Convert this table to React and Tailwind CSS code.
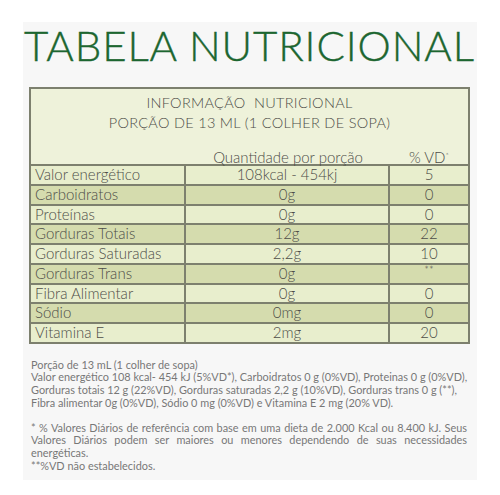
const rows = [
  { name: "Valor energético", qty: "108kcal - 454kj", vd: "5", dark: false },
  { name: "Carboidratos", qty: "0g", vd: "0", dark: true },
  { name: "Proteínas", qty: "0g", vd: "0", dark: false },
  { name: "Gorduras Totais", qty: "12g", vd: "22", dark: true },
  { name: "Gorduras Saturadas", qty: "2,2g", vd: "10", dark: false },
  { name: "Gorduras Trans", qty: "0g", vd: "**", dark: true },
  { name: "Fibra Alimentar", qty: "0g", vd: "0", dark: false },
  { name: "Sódio", qty: "0mg", vd: "0", dark: true },
  { name: "Vitamina E", qty: "2mg", vd: "20", dark: false },
];

function Row({ row }) {
  return (
    <div
      className={
        "grid grid-cols-[155px_204px_1fr] h-[19.75px] border-t-2 border-[#7d806e] leading-[17px] " +
        (row.dark ? "bg-[#d5dcae]" : "bg-[#e8eecd]")
      }
    >
      <div className="pl-[4px] border-r-2 border-[#7d806e]">{row.name}</div>
      <div className="text-center border-r-2 border-[#7d806e]">{row.qty}</div>
      {row.vd === "**" ? (
        <div className="text-center text-[11px] leading-[10px]">**</div>
      ) : (
        <div className="text-center">{row.vd}</div>
      )}
    </div>
  );
}

export default function App() {
  return (
    <div className="w-[500px] h-[495px] bg-white pt-[22px] pl-[23px] font-['Lato',_'Liberation_Sans',_sans-serif]">
      <div className="w-[454px] h-[458px] bg-[#f7f7f7]">
        <h1 className="pt-[3px] pl-[1px] text-[42px] leading-[40px] font-light text-[#1c6630] tracking-[0.9px] whitespace-nowrap [-webkit-text-stroke:0.4px_#1c6630]">
          TABELA NUTRICIONAL
        </h1>

        <div className="ml-[6px] mt-[22px] w-[441px] border-2 border-[#7d806e] text-[15px] font-light text-[#4d4d48]">
          <div className="h-[75px] bg-[#eef2da] relative">
            <div className="pt-[4px] text-center leading-[20px] text-[14.5px] tracking-[0.3px]">
              <p>INFORMAÇÃO&nbsp; NUTRICIONAL</p>
              <p>PORÇÃO DE 13 ML (1 COLHER DE SOPA)</p>
            </div>
            <div className="grid grid-cols-[155px_204px_1fr] mt-[15px] leading-[18px]">
              <div></div>
              <div className="text-center">Quantidade por porção</div>
              <div className="text-center">
                % VD<sup className="text-[8px]">*</sup>
              </div>
            </div>
          </div>
          {rows.map((row) => (
            <Row key={row.name} row={row} />
          ))}
        </div>

        <div className="mt-[15px] pl-[8px] w-[445px] text-[10.9px] leading-[12.6px] text-[#777]">
          <p className="whitespace-nowrap">Porção de 13 mL (1 colher de sopa)</p>
          <p className="whitespace-nowrap">
            Valor energético 108 kcal- 454 kJ (5%VD*), Carboidratos 0 g (0%VD), Proteinas 0 g (0%VD),
          </p>
          <p className="whitespace-nowrap">
            Gorduras totais 12 g (22%VD), Gorduras saturadas 2,2 g (10%VD), Gorduras trans 0 g (**),
          </p>
          <p className="whitespace-nowrap">
            Fibra alimentar 0g (0%VD), Sódio 0 mg (0%VD) e Vitamina E 2 mg (20% VD).
          </p>
          <div className="mt-[12.6px] w-[436px]">
            <p className="text-justify [text-align-last:justify] whitespace-nowrap">
              * % Valores Diários de referência com base em uma dieta de 2.000 Kcal ou 8.400 kJ. Seus
            </p>
            <p className="text-justify [text-align-last:justify]">
              Valores Diários podem ser maiores ou menores dependendo de suas necessidades
            </p>
            <p>energéticas.</p>
            <p>**%VD não estabelecidos.</p>
          </div>
        </div>
      </div>
    </div>
  );
}
